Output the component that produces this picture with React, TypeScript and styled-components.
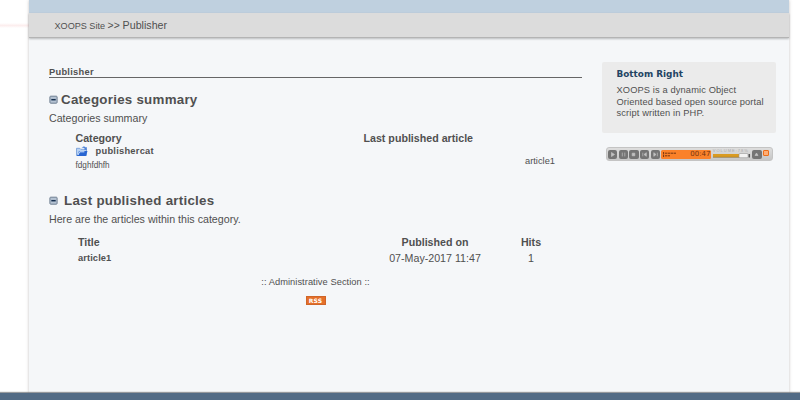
import React from "react";
import styled, { createGlobalStyle } from "styled-components";

const GlobalStyle = createGlobalStyle`
  * { box-sizing: border-box; }
  html, body { margin: 0; padding: 0; }
  body {
    width: 800px;
    height: 400px;
    overflow: hidden;
    background: #fff;
    color: #505050;
    font-family: "Liberation Sans", Arial, sans-serif;
    font-size: 10.6px;
  }
`;

const Screen = styled.div`
  height: 400px;
  display: flex;
  flex-direction: column;
`;

const Body = styled.div`
  height: 393px;
  display: flex;
`;

const Gutter = styled.div`
  width: 29px;
  flex: none;
  padding-top: 23px;
`;

const Streak = styled.div`
  height: 5px;
  background: linear-gradient(to bottom, #fff, #fceeee, #fff);
`;

const Page = styled.div`
  width: 760px;
  height: 393px;
  background: #f5f7f9;
  box-shadow: 0 0 3px rgba(90, 80, 80, 0.35);
`;

const Banner = styled.div`
  height: 13px;
  background: #bfd0df;
`;

const Breadcrumb = styled.nav`
  height: 25px;
  padding: 0 0 1px 25.5px;
  display: flex;
  align-items: baseline;
  line-height: 24px;
  background: #dcdcdc;
  border-bottom: 1px solid #b4b4b4;
  box-shadow: 0 1px 2px rgba(0, 0, 0, 0.25);
  white-space: pre;
`;

const Crumb = styled.span<{ $size: number }>`
  font-size: ${(p) => p.$size}px;
`;

const Columns = styled.div`
  display: flex;
  padding-left: 20px;
`;

const Main = styled.main`
  width: 533px;
  padding-top: 27px;
`;

const ModuleTitle = styled.h1`
  margin: 0 0 11.5px;
  height: 13px;
  line-height: 14px;
  font-size: 9.3px;
  letter-spacing: 0.27px;
  border-bottom: 1px solid #666;
`;

const SectionTitle = styled.h2<{ $gap: number }>`
  margin: 0;
  height: 19px;
  display: flex;
  align-items: center;
  gap: ${(p) => p.$gap}px;
  font-size: 13.33px;
  letter-spacing: 0.26px;
`;

const Intro = styled.p`
  margin: 0;
  line-height: 18px;
  font-size: 10.67px;
`;

const CategoryTable = styled.div`
  display: grid;
  grid-template-columns: 288px 191.5px;
  grid-template-rows: 14px 13px 14.5px;
  align-items: center;
  margin: 4px 0 19px 26.5px;
`;

const Head = styled.strong`
  font-size: 10.67px;
`;

const CategoryLink = styled.a`
  display: flex;
  align-items: center;
  gap: 8px;
  font-size: 9.3px;
  font-weight: bold;
  letter-spacing: 0.26px;
`;

const Latest = styled.a`
  grid-row: 2 / 4;
  grid-column: 2;
  justify-self: end;
  padding-top: 6px;
  font-size: 9.3px;
`;

const Description = styled.span`
  grid-column: 1;
  padding-top: 1px;
  font-size: 8.2px;
`;

const ArticleTable = styled.div`
  display: grid;
  grid-template-columns: 300px 114px 78px;
  grid-template-rows: 16px 17px;
  align-items: center;
  justify-items: center;
  margin: 5.5px 0 0 29px;
  font-size: 10.67px;
  & > :nth-child(3n + 1) { justify-self: start; }
`;

const ArticleLink = styled.a`
  font-size: 9.3px;
  font-weight: bold;
  letter-spacing: 0.1px;
`;

const Footnotes = styled.div`
  display: flex;
  flex-direction: column;
  align-items: center;
  padding-top: 8px;
`;

const AdminLink = styled.a`
  line-height: 14px;
  font-size: 9.3px;
  letter-spacing: 0.05px;
`;

const RssBadge = styled.span`
  margin-top: 7px;
  width: 20px;
  height: 9px;
  display: flex;
  align-items: center;
  justify-content: center;
  background: #e5702a;
  border: 1px solid #cf6528;
  color: #fff;
  font: bold 6px/7px "DejaVu Sans", sans-serif;
  letter-spacing: 0.2px;
`;

const Sidebar = styled.aside`
  padding: 24px 0 0 20px;
`;

const Block = styled.section`
  width: 174px;
  height: 71px;
  padding: 6px 0 0 14.5px;
  background: #ebebeb;
  border-radius: 2px;
`;

const BlockTitle = styled.h3`
  margin: 0 0 4px;
  line-height: 13px;
  color: #234463;
  font-family: "DejaVu Sans", sans-serif;
  font-size: 8.87px;
`;

const BlockText = styled.p`
  margin: 0;
  line-height: 11.6px;
  font-size: 9.3px;
  letter-spacing: 0.12px;
  white-space: nowrap;
`;

const Player = styled.div`
  width: 167px;
  height: 14px;
  margin: 14px 0 0 3.5px;
  padding: 0 1.5px;
  display: flex;
  align-items: center;
  gap: 1.4px;
  border: 1px solid #c4c4c4;
  border-radius: 3px;
  background: linear-gradient(#dedede, #c6c6c6);
`;

const Key = styled.span`
  width: 9.3px;
  height: 9px;
  flex: none;
  display: flex;
  border-radius: 2px;
  background: #747474;
`;

const Display = styled.div`
  width: 50px;
  height: 9px;
  flex: none;
  padding: 0 1px 0 2px;
  display: flex;
  align-items: center;
  justify-content: space-between;
  border-radius: 1.5px;
  background: #fa8129;
  color: #743510;
`;

const Clock = styled.span`
  font: 7px/9px "DejaVu Sans", sans-serif;
`;

const Volume = styled.div`
  width: 38px;
  height: 10px;
  flex: none;
  display: flex;
  flex-direction: column;
  color: #aaa;
  font-size: 4px;
  line-height: 4px;
  letter-spacing: 1px;
`;

const Close = styled.span`
  width: 6px;
  height: 6px;
  flex: none;
  margin: 0 0 3px;
  border: 1px solid #ed6d18;
  border-radius: 1px;
  background: #ffad74;
`;

const Footer = styled.footer`
  height: 7px;
  background: #526b85;
  box-shadow: 0 -1px 1px rgba(70, 75, 80, 0.55);
  z-index: 1;
`;

const CollapseIcon = () => (
  <svg width="9" height="9" viewBox="0 0 9 9">
    <rect x="0.9" y="1.2" width="7.2" height="7" rx="0.8" fill="#b5c3d3" stroke="#6f7f91" />
    <path d="M2.3 4.7h4.4" stroke="#152f4e" strokeWidth="1.5" />
  </svg>
);

const FolderIcon = () => (
  <svg width="12" height="11" viewBox="0 0 12 11">
    <path d="M.5 9.5V2.3h3.3l1 1h5.7v6.2z" fill="#b9d3f2" stroke="#6f98d5" strokeWidth=".8" />
    <path d="M1 10l2-5h8.5L9.8 10z" fill="#2765d2" />
    <path d="M5.5 2.2C7-.2 9 .2 9.8 1.6l1-.5v3L8 3.4l.8-.7C8 1.6 6.7 1.6 5.5 2.2z" fill="#4b80d6" />
    <path d="M2 9l1.6-3.2h4.8" fill="none" stroke="#dcecff" strokeWidth="1" />
  </svg>
);

const keyShapes = [
  "M3.5 2.5v4L6.5 4.5z",
  "M3.3 2.6v3.8M5.8 2.6v3.8",
  "M3.2 3.2h2.6v2.6H3.2z",
  "M2.8 2.7v3.6M6.3 2.7L4 4.5l2.3 1.8z",
  "M6.3 2.7v3.6M2.8 2.7L5 4.5 2.8 6.3z",
];

const KeyIcon = ({ d }: { d: string }) => (
  <Key>
    <svg width="9" height="9" viewBox="0 0 9 9">
      <path d={d} fill="#c2c2c2" stroke="#c2c2c2" strokeWidth=".7" />
    </svg>
  </Key>
);

const SignalIcon = () => (
  <svg width="14" height="7" viewBox="0 0 14 7">
    <path d="M.6 1v5M2 2.2h11M2 4.8h5" stroke="#743510" strokeWidth="1" strokeDasharray="2.4 .5" />
  </svg>
);

const VolumeTrack = () => (
  <svg width="38" height="6" viewBox="0 0 38 6">
    <rect y="1" width="27" height="3" fill="#d99b22" />
    <path d="M0 4.3h27" stroke="#8f6c29" strokeWidth=".7" />
    <rect x="26" y=".5" width="9" height="4.2" rx="1" fill="#f3f3f3" stroke="#999" strokeWidth=".6" />
    <path d="M36.3 1v3.5" stroke="#555" strokeWidth="1.5" />
  </svg>
);

export default function App() {
  return (
    <>
      <GlobalStyle />
      <Screen>
        <Body>
          <Gutter><Streak /></Gutter>
          <Page>
            <Banner />
            <Breadcrumb>
              <Crumb $size={9.1}>XOOPS Site </Crumb>
              <Crumb $size={10.4}>&gt;&gt; </Crumb>
              <Crumb $size={10.67}>Publisher</Crumb>
            </Breadcrumb>
            <Columns>
              <Main>
                <ModuleTitle>Publisher</ModuleTitle>
                <SectionTitle $gap={3}><CollapseIcon />Categories summary</SectionTitle>
                <Intro>Categories summary</Intro>
                <CategoryTable>
                  <Head>Category</Head>
                  <Head>Last published article</Head>
                  <CategoryLink><FolderIcon />publishercat</CategoryLink>
                  <Latest>article1</Latest>
                  <Description>fdghfdhfh</Description>
                </CategoryTable>
                <SectionTitle $gap={6}><CollapseIcon />Last published articles</SectionTitle>
                <Intro>Here are the articles within this category.</Intro>
                <ArticleTable>
                  <Head>Title</Head>
                  <Head>Published on</Head>
                  <Head>Hits</Head>
                  <ArticleLink>article1</ArticleLink>
                  <span>07-May-2017 11:47</span>
                  <span>1</span>
                </ArticleTable>
                <Footnotes>
                  <AdminLink>:: Administrative Section ::</AdminLink>
                  <RssBadge>RSS</RssBadge>
                </Footnotes>
              </Main>
              <Sidebar>
                <Block>
                  <BlockTitle>Bottom Right</BlockTitle>
                  <BlockText>
                    XOOPS is a dynamic Object<br />
                    Oriented based open source portal<br />
                    script written in PHP.
                  </BlockText>
                </Block>
                <Player>
                  {keyShapes.map((d) => <KeyIcon key={d} d={d} />)}
                  <Display><SignalIcon /><Clock>00:47</Clock></Display>
                  <Volume>VOLUME:78%<VolumeTrack /></Volume>
                  <KeyIcon d="M3 5.5L4.5 3 6 5.5z" />
                  <Close />
                </Player>
              </Sidebar>
            </Columns>
          </Page>
        </Body>
        <Footer />
      </Screen>
    </>
  );
}
